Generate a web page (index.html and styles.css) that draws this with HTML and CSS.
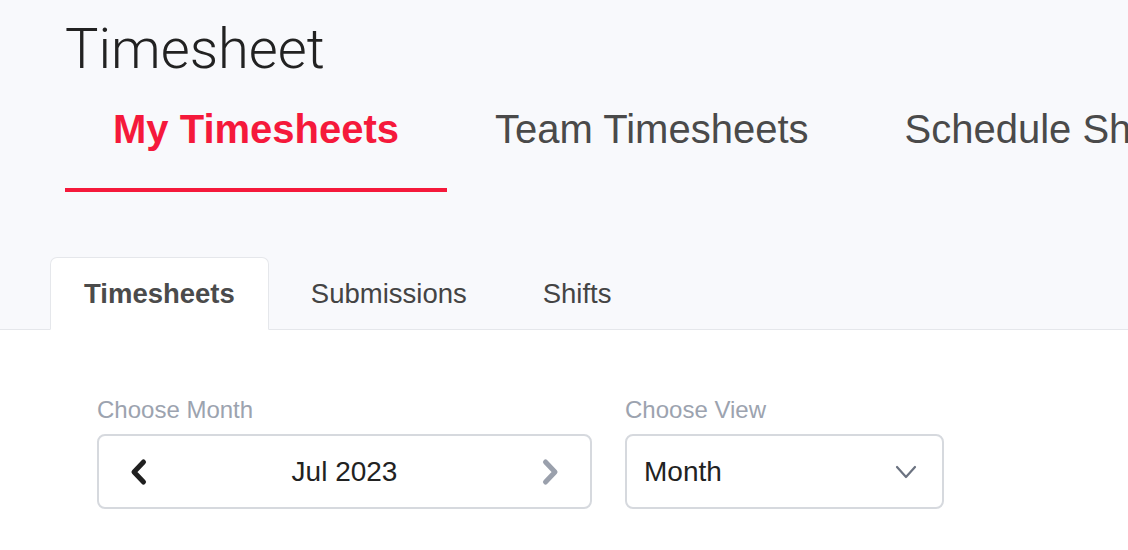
FILE: index.html
```html
<!DOCTYPE html>
<html lang="en">
<head>
<meta charset="utf-8">
<title>Timesheet</title>
<link rel="stylesheet" href="styles.css">
</head>
<body>
<header class="page-head">
  <h1 class="title">Timesheet</h1>
  <nav class="main-tabs">
    <a class="main-tab active">My Timesheets</a>
    <a class="main-tab">Team Timesheets</a>
    <a class="main-tab">Schedule Shifts</a>
  </nav>
  <div class="sub-tabs">
    <a class="sub-tab active">Timesheets</a>
    <a class="sub-tab">Submissions</a>
    <a class="sub-tab">Shifts</a>
  </div>
</header>
<main class="content">
  <div class="fields">
    <div class="field">
      <label class="field-label">Choose Month</label>
      <div class="month-picker">
        <button class="nav-btn prev" aria-label="Previous month">
          <svg width="20" height="28" viewBox="0 0 20 28"><path d="M13.5 4 L4 14 L13.5 24" fill="none" stroke="#1f1f1f" stroke-width="5" stroke-linecap="round" stroke-linejoin="round"/></svg>
        </button>
        <span class="month-value">Jul 2023</span>
        <button class="nav-btn next" aria-label="Next month">
          <svg width="20" height="28" viewBox="0 0 20 28"><path d="M6.5 4 L16 14 L6.5 24" fill="none" stroke="#9aa0ac" stroke-width="5" stroke-linecap="round" stroke-linejoin="round"/></svg>
        </button>
      </div>
    </div>
    <div class="field">
      <label class="field-label">Choose View</label>
      <div class="select">
        <span class="select-value">Month</span>
        <svg class="caret" width="24" height="16" viewBox="0 0 24 16"><path d="M3 3 L12 13 L21 3" fill="none" stroke="#6b7280" stroke-width="2.2" stroke-linecap="round" stroke-linejoin="round"/></svg>
      </div>
    </div>
  </div>
</main>
</body>
</html>
```
FILE: styles.css
```css
* { box-sizing: border-box; }
html, body { margin: 0; padding: 0; }
body {
  background: #ffffff;
  font-family: "Liberation Sans", Arial, sans-serif;
  width: 1128px;
  overflow: hidden;
}
.page-head {
  background: #f8f9fc;
  padding-top: 21px;
}
.title {
  margin: 0 0 0 65px;
  font-family: Roboto, "Liberation Sans", sans-serif;
  font-weight: 300;
  font-size: 56px;
  line-height: 56px;
  color: #222222;
}
.main-tabs {
  display: flex;
  padding-left: 65px;
  white-space: nowrap;
  overflow: hidden;
}
.main-tab {
  display: block;
  padding: 29px 48px 36px;
  font-size: 40px;
  line-height: 46px;
  color: #4a4a4a;
  border-bottom: 4px solid transparent;
  flex-shrink: 0;
}
.main-tab.active {
  color: #f5193b;
  font-weight: 700;
  border-bottom-color: #f5193b;
}
.sub-tabs {
  display: flex;
  gap: 8px;
  margin-top: 65px;
  padding-left: 50px;
  border-bottom: 1px solid #e5e7eb;
}
.sub-tab {
  display: block;
  height: 73px;
  margin-bottom: -1px;
  padding: 0 33px;
  font-size: 27.5px;
  line-height: 71px;
  color: #444444;
  border: 1px solid transparent;
  border-radius: 7px 7px 0 0;
}
.sub-tab.active {
  background: #ffffff;
  border-color: #e5e7eb;
  border-bottom-color: #ffffff;
  font-weight: 700;
  color: #4b4b4b;
}
.content {
  background: #ffffff;
  padding: 66px 0 0 97px;
  height: 220px;
}
.fields {
  display: flex;
  gap: 33px;
}
.field {
  display: flex;
  flex-direction: column;
  gap: 10px;
}
.field-label {
  font-size: 24px;
  line-height: 28px;
  color: #9ca3af;
}
.month-picker {
  width: 495px;
  height: 75px;
  border: 2px solid #d6d9de;
  border-radius: 8px;
  display: flex;
  align-items: center;
  justify-content: space-between;
  padding: 0 31px 0 31px;
}
.nav-btn {
  background: none;
  border: 0;
  padding: 0;
  width: 20px;
  height: 28px;
  display: flex;
}
.month-value {
  font-size: 28px;
  color: #222222;
}
.select {
  width: 319px;
  height: 75px;
  border: 2px solid #d6d9de;
  border-radius: 8px;
  display: flex;
  align-items: center;
  justify-content: space-between;
  padding: 0 24px 0 17px;
}
.select-value {
  font-size: 28px;
  color: #222222;
}
.caret { display: block; }
```
